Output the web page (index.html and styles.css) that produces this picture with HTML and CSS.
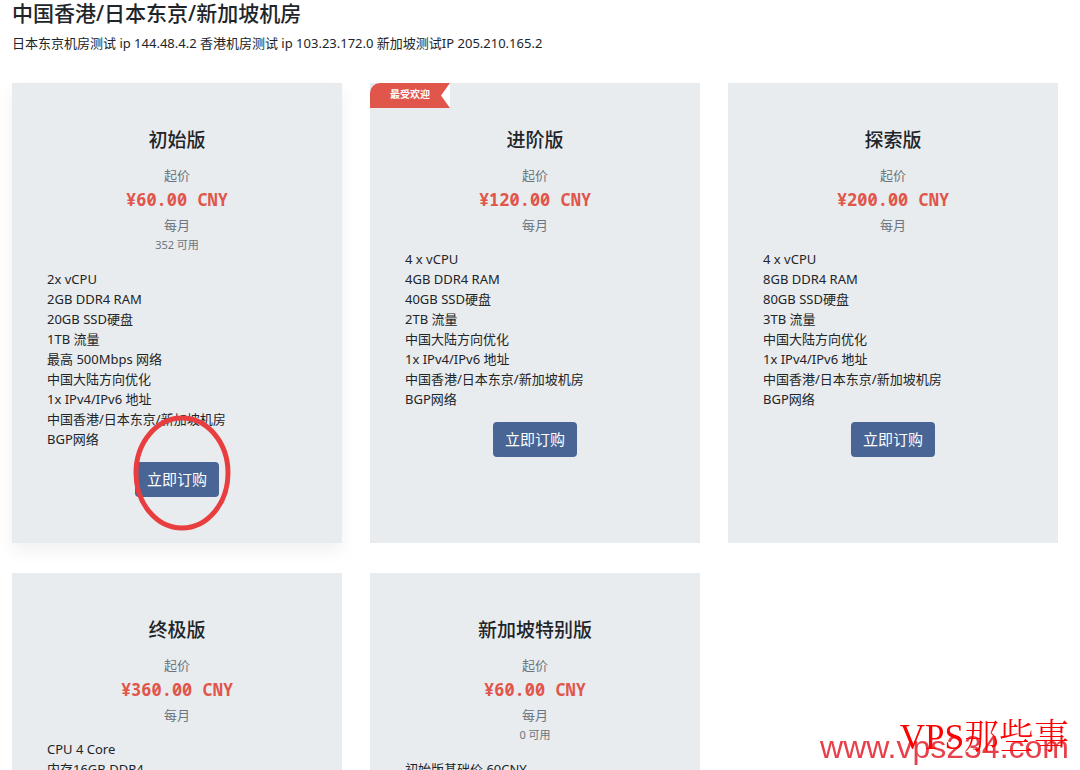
FILE: index.html
```html
<!DOCTYPE html>
<html lang="zh-CN">
<head>
<meta charset="utf-8">
<meta name="viewport" content="width=device-width, initial-scale=1">
<title>中国香港/日本东京/新加坡机房</title>
<link rel="stylesheet" href="styles.css">
</head>
<body>
<main class="page">
  <header class="intro">
    <h1 class="intro-title">中国香港/日本东京/新加坡机房</h1>
    <p class="intro-text">日本东京机房测试 ip 144.48.4.2 香港机房测试 ip 103.23.172.0 新加坡测试IP 205.210.165.2</p>
  </header>
  <section class="plans">
    <article class="plan plan-raised">
      <h2 class="plan-name">初始版</h2>
      <p class="plan-note">起价</p>
      <p class="plan-price">¥60.00 CNY</p>
      <p class="plan-note">每月</p>
      <p class="plan-stock">352 可用</p>
      <ul class="plan-features">
        <li>2x vCPU</li>
        <li>2GB DDR4 RAM</li>
        <li>20GB SSD硬盘</li>
        <li>1TB 流量</li>
        <li>最高 500Mbps 网络</li>
        <li>中国大陆方向优化</li>
        <li>1x IPv4/IPv6 地址</li>
        <li>中国香港/日本东京/新加坡机房</li>
        <li>BGP网络</li>
      </ul>
      <div class="order">
        <button class="order-button" type="button">立即订购</button>
        <svg class="order-ring" viewBox="0 0 98 116" aria-hidden="true"><ellipse cx="49" cy="58" rx="46" ry="55" fill="none" stroke="#e83e40" stroke-width="5"/></svg>
      </div>
    </article>
    <article class="plan">
      <span class="ribbon">最受欢迎</span>
      <h2 class="plan-name">进阶版</h2>
      <p class="plan-note">起价</p>
      <p class="plan-price">¥120.00 CNY</p>
      <p class="plan-note">每月</p>
      <ul class="plan-features">
        <li>4 x vCPU</li>
        <li>4GB DDR4 RAM</li>
        <li>40GB SSD硬盘</li>
        <li>2TB 流量</li>
        <li>中国大陆方向优化</li>
        <li>1x IPv4/IPv6 地址</li>
        <li>中国香港/日本东京/新加坡机房</li>
        <li>BGP网络</li>
      </ul>
      <div class="order">
        <button class="order-button" type="button">立即订购</button>
      </div>
    </article>
    <article class="plan">
      <h2 class="plan-name">探索版</h2>
      <p class="plan-note">起价</p>
      <p class="plan-price">¥200.00 CNY</p>
      <p class="plan-note">每月</p>
      <ul class="plan-features">
        <li>4 x vCPU</li>
        <li>8GB DDR4 RAM</li>
        <li>80GB SSD硬盘</li>
        <li>3TB 流量</li>
        <li>中国大陆方向优化</li>
        <li>1x IPv4/IPv6 地址</li>
        <li>中国香港/日本东京/新加坡机房</li>
        <li>BGP网络</li>
      </ul>
      <div class="order">
        <button class="order-button" type="button">立即订购</button>
      </div>
    </article>
    <article class="plan">
      <h2 class="plan-name">终极版</h2>
      <p class="plan-note">起价</p>
      <p class="plan-price">¥360.00 CNY</p>
      <p class="plan-note">每月</p>
      <ul class="plan-features">
        <li>CPU 4 Core</li>
        <li>内存16GB DDR4</li>
      </ul>
    </article>
    <article class="plan">
      <h2 class="plan-name">新加坡特别版</h2>
      <p class="plan-note">起价</p>
      <p class="plan-price">¥60.00 CNY</p>
      <p class="plan-note">每月</p>
      <p class="plan-stock">0 可用</p>
      <ul class="plan-features">
        <li>初始版基础价 60CNY</li>
      </ul>
    </article>
  </section>
</main>
<div class="mark mark-site">www.vps234.com</div>
<div class="mark mark-name">VPS那些事</div>
</body>
</html>
```
FILE: styles.css
```css
* {
  box-sizing: border-box;
}

body {
  margin: 0;
  height: 100vh;
  overflow: hidden;
  background: #fff;
  color: #212529;
  font: 13px/20px "Noto Sans", "Noto Sans CJK SC", sans-serif;
}

h1, h2, p, ul {
  margin: 0;
  padding: 0;
}

.page {
  padding: 0 22px 30px 12px;
}

.intro {
  padding-bottom: 30px;
}

.intro-title {
  padding-bottom: 6px;
  font-size: 21px;
  line-height: 27px;
  font-weight: 500;
}

.plans {
  display: grid;
  grid-template-columns: repeat(3, 1fr);
  grid-auto-rows: 1fr;
  gap: 30px 28px;
}

.plan {
  position: relative;
  padding: 44px 35px 46px;
  background: #e9ecef;
  text-align: center;
}

.plan-raised {
  box-shadow: 0 8px 16px rgba(0, 0, 0, 0.06);
}

.plan-name {
  padding-bottom: 12px;
  font-size: 19px;
  line-height: 26px;
  font-weight: 500;
}

.plan-note {
  color: #6c757d;
}

.plan-price {
  color: #e0564b;
  font: bold 17px/30px "Noto Sans Mono", "DejaVu Sans Mono", monospace;
}

.plan-stock {
  color: #6c757d;
  font-size: 11px;
}

.plan-features {
  padding-top: 14px;
  list-style: none;
  text-align: left;
}

.order {
  position: relative;
  width: fit-content;
  margin: 13px auto 0;
}

.order-button {
  display: block;
  padding: 6px 12px;
  border: 0;
  border-radius: 4px;
  background: #486595;
  color: #fff;
  font: 15px/23px "Noto Sans", "Noto Sans CJK SC", sans-serif;
}

.order-ring {
  position: absolute;
  top: -47px;
  left: -2px;
  width: 98px;
  height: 116px;
  pointer-events: none;
}

.ribbon {
  position: absolute;
  top: 0;
  left: 0;
  width: 80px;
  height: 25px;
  border-top-left-radius: 10px;
  background: #e0564b;
  color: #fff;
  font-size: 10px;
  line-height: 22px;
  font-weight: 700;
}

.ribbon::after {
  content: "";
  position: absolute;
  top: 0;
  right: 0;
  width: 9px;
  height: 25px;
  background: #fff;
  clip-path: polygon(100% 0, 0 50%, 100% 100%);
}

.mark {
  position: fixed;
  right: 11px;
  white-space: nowrap;
}

.mark-site {
  bottom: 5px;
  color: #e8404a;
  font: 32px/36px "Liberation Sans", sans-serif;
}

.mark-name {
  bottom: 12px;
  color: #f00;
  font: 300 35px/40px "Liberation Serif", "Noto Serif CJK SC", "Noto Sans CJK SC", serif;
}
```
